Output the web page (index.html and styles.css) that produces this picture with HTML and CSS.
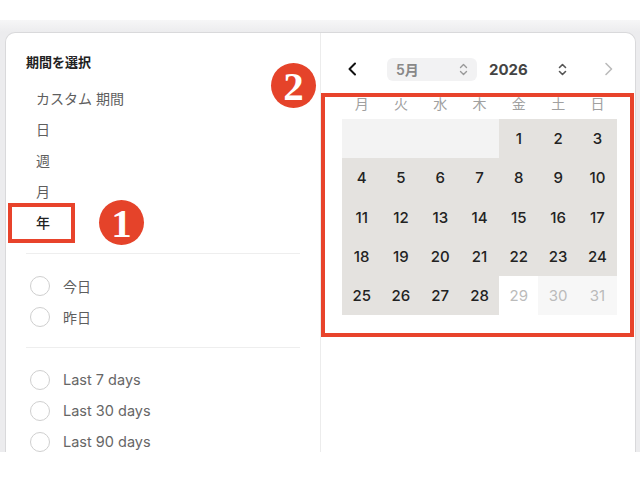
FILE: index.html
```html
<!DOCTYPE html>
<html lang="ja">
<head>
<meta charset="utf-8">
<link rel="stylesheet" href="styles.css">
</head>
<body>
<div class="frame">
  <div class="panel">
    <aside class="side">
      <h2 class="title">期間を選択</h2>
      <ul class="menu">
        <li>カスタム 期間</li>
        <li>日</li>
        <li>週</li>
        <li>月</li>
        <li class="active">年</li>
      </ul>
      <div class="sep"></div>
      <ul class="radios">
        <li><span class="radio"></span>今日</li>
        <li><span class="radio"></span>昨日</li>
      </ul>
      <div class="sep"></div>
      <ul class="radios latin">
        <li><span class="radio"></span>Last 7 days</li>
        <li><span class="radio"></span>Last 30 days</li>
        <li><span class="radio"></span>Last 90 days</li>
      </ul>
    </aside>
    <section class="cal">
      <div class="head">
        <svg class="prev" width="10" height="14" viewBox="0 0 10 14"><path d="M8 1.5 L2.5 7 L8 12.5" fill="none" stroke="#111" stroke-width="2" stroke-linecap="round" stroke-linejoin="round"/></svg>
        <div class="select">
          <span>5月</span>
          <svg width="9" height="13" viewBox="0 0 9 13"><path d="M1.5 4.5 L4.5 1.5 L7.5 4.5 M1.5 8.5 L4.5 11.5 L7.5 8.5" fill="none" stroke="#999" stroke-width="1.4" stroke-linecap="round" stroke-linejoin="round"/></svg>
        </div>
        <span class="year">2026</span>
        <svg class="yicon" width="9" height="13" viewBox="0 0 9 13"><path d="M1.5 4.5 L4.5 1.5 L7.5 4.5 M1.5 8.5 L4.5 11.5 L7.5 8.5" fill="none" stroke="#555" stroke-width="1.6" stroke-linecap="round" stroke-linejoin="round"/></svg>
        <svg class="next" width="10" height="14" viewBox="0 0 10 14"><path d="M2 1.5 L7.5 7 L2 12.5" fill="none" stroke="#bbb" stroke-width="1.6" stroke-linecap="round" stroke-linejoin="round"/></svg>
      </div>
      <div class="weekdays">
        <span>月</span><span>火</span><span>水</span><span>木</span><span>金</span><span>土</span><span>日</span>
      </div>
      <div class="days">
        <span class="empty"></span><span class="empty"></span><span class="empty"></span><span class="empty"></span>
        <span>1</span><span>2</span><span>3</span>
        <span>4</span><span>5</span><span>6</span><span>7</span><span>8</span><span>9</span><span>10</span>
        <span>11</span><span>12</span><span>13</span><span>14</span><span>15</span><span>16</span><span>17</span>
        <span>18</span><span>19</span><span>20</span><span>21</span><span>22</span><span>23</span><span>24</span>
        <span>25</span><span>26</span><span>27</span><span>28</span>
        <span class="out white">29</span><span class="out">30</span><span class="out">31</span>
      </div>
    </section>
  </div>
  <div class="mark box1"></div>
  <div class="badge b1">1</div>
  <div class="mark box2"></div>
  <div class="badge b2">2</div>
</div>
</body>
</html>
```

FILE: styles.css
```css
* { box-sizing: border-box; }
html, body { margin: 0; padding: 0; background: #fff; }
body {
  font-family: "Inter", "Noto Sans CJK JP", sans-serif;
  width: 640px;
  height: 480px;
  overflow: hidden;
}
.frame {
  position: relative;
  margin-top: 20px;
  height: 432px;
  background: linear-gradient(#f6f6f7, #ececee 12px);
  padding: 12px 4px 0 5px;
  overflow: hidden;
}
.panel {
  background: #fff;
  border: 1px solid #d9d9db;
  border-bottom: none;
  border-radius: 10px 10px 0 0;
  height: 100%;
  display: grid;
  grid-template-columns: 315px 1fr;
}
.side {
  border-right: 1px solid #ececec;
  padding: 20px 20px 0 20px;
}
.title {
  margin: 0;
  font-size: 13px;
  line-height: 18px;
  font-weight: 700;
  color: #222;
}
ul { list-style: none; margin: 0; padding: 0; }
.menu { margin-top: 12px; }
.menu li {
  height: 31px;
  line-height: 31px;
  padding-left: 10px;
  font-size: 14px;
  color: #5e5e5e;
}
.menu li.active { color: #222; font-weight: 500; }
.sep {
  height: 1px;
  background: #eeeeee;
  margin: 15px 0 16px 0;
}
.radios li {
  height: 31px;
  display: flex;
  align-items: center;
  gap: 13px;
  padding-left: 4px;
  font-size: 14px;
  color: #5e5e5e;
}
.radios.latin li { font-size: 14.5px; color: #666; }
.radio {
  width: 20px;
  height: 20px;
  border-radius: 50%;
  border: 1.5px solid #cfcfcf;
  flex: none;
}
.cal { padding: 24px 0 0 21px; }
.head {
  display: flex;
  align-items: center;
  height: 24px;
}
.prev { margin-left: 5px; }
.select {
  margin-left: 30px;
  width: 90px;
  height: 23px;
  background: #f2f2f3;
  border-radius: 6px;
  display: flex;
  align-items: center;
  justify-content: space-between;
  padding: 0 9px 0 9px;
  font-size: 14px;
  font-weight: 600;
  color: #888;
}
.year {
  margin-left: 12px;
  font-size: 15px;
  font-weight: 700;
  color: #444;
}
.yicon { margin-left: 30px; }
.next { margin-left: 37px; }
.weekdays {
  display: grid;
  grid-template-columns: repeat(7, 39.3px);
  margin-top: 13px;
  height: 20px;
  line-height: 20px;
  text-align: center;
  font-size: 14px;
  color: #a0a0a0;
}
.days {
  margin-top: 5px;
  display: grid;
  grid-template-columns: repeat(7, 39.3px);
  grid-auto-rows: 39.3px;
}
.days span {
  background: #e4e2df;
  display: flex;
  align-items: center;
  justify-content: center;
  font-size: 15px;
  font-weight: 500;
  color: #222;
}
.days span.empty { background: #f3f3f3; }
.days span.out { background: #f7f7f7; color: #bbb; font-weight: 400; }
.days span.out.white { background: #fff; }
.mark {
  position: absolute;
  border: 4px solid #e8432b;
}
.box1 { left: 8px; top: 183px; width: 67px; height: 40px; }
.box2 { left: 321px; top: 73px; width: 313px; height: 244px; }
.badge {
  position: absolute;
  width: 45px;
  height: 45px;
  border-radius: 50%;
  background: #e5432a;
  color: #fff;
  font-family: "Liberation Serif", "DejaVu Serif", serif;
  font-weight: 700;
  font-size: 41px;
  line-height: 47px;
  text-align: center;
}
.b1 { left: 99px; top: 180px; }
.b2 { left: 271px; top: 43px; }
```
